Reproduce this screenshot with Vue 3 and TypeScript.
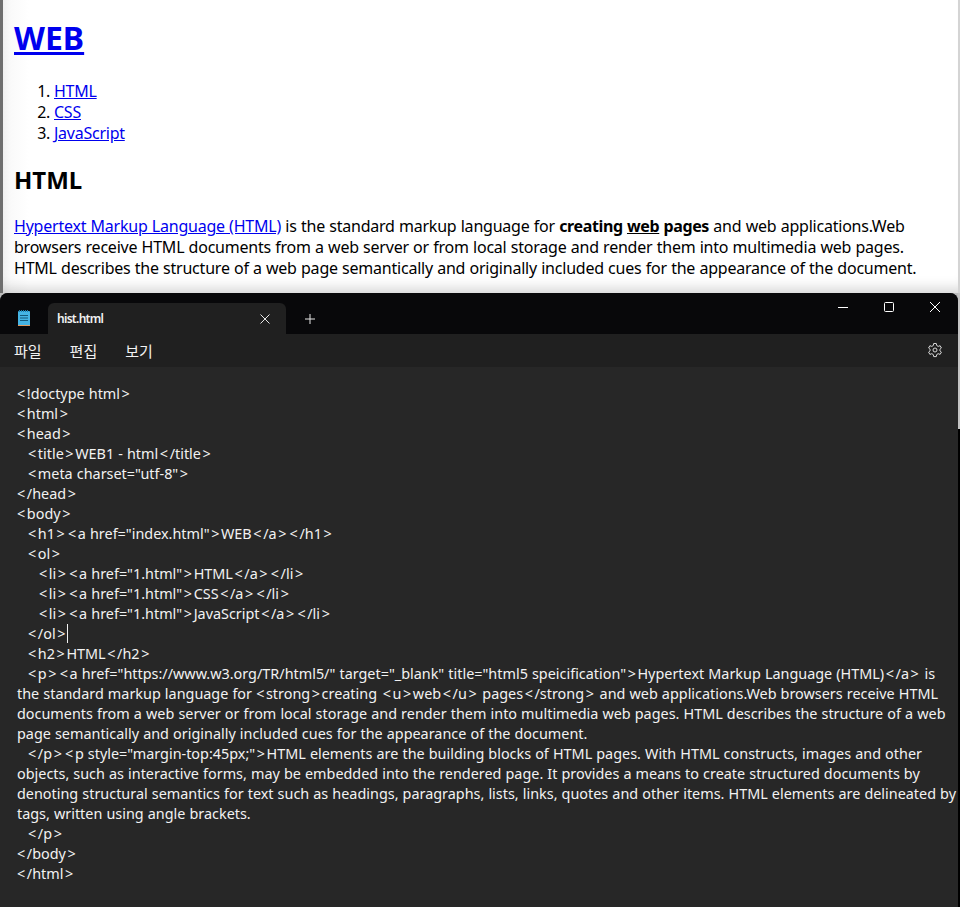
<script setup lang="ts">
interface Token { text: string; bracket: boolean }
interface Line { indent: number; tokens: Token[]; caret: boolean }

const menus: string[] = ['파일', '편집', '보기']
const source: string[] = [
  '<!doctype html>',
  '<html>',
  '<head>',
  '  <title>WEB1 - html</title>',
  '  <meta charset="utf-8">',
  '</head>',
  '<body>',
  '  <h1><a href="index.html">WEB</a></h1>',
  '  <ol>',
  '    <li><a href="1.html">HTML</a></li>',
  '    <li><a href="1.html">CSS</a></li>',
  '    <li><a href="1.html">JavaScript</a></li>',
  '  </ol>|',
  '  <h2>HTML</h2>',
  '  <p><a href="https://www.w3.org/TR/html5/" target="_blank" title="html5 speicification">Hypertext Markup Language (HTML)</a> is',
  'the standard markup language for <strong>creating <u>web</u> pages</strong> and web applications.Web browsers receive HTML',
  'documents from a web server or from local storage and render them into multimedia web pages. HTML describes the structure of a web',
  'page semantically and originally included cues for the appearance of the document.',
  '  </p><p style="margin-top:45px;">HTML elements are the building blocks of HTML pages. With HTML constructs, images and other',
  'objects, such as interactive forms, may be embedded into the rendered page. It provides a means to create structured documents by',
  'denoting structural semantics for text such as headings, paragraphs, lists, links, quotes and other items. HTML elements are delineated by',
  'tags, written using angle brackets.',
  '  </p>',
  '</body>',
  '</html>',
]

const lines: Line[] = source.map((raw) => {
  const caret = raw.endsWith('|')
  const body = caret ? raw.slice(0, -1) : raw
  const trimmed = body.replace(/^ +/, '')
  const tokens = trimmed
    .split(/([<>])/)
    .filter((t) => t.length > 0)
    .map((t) => ({ text: t, bracket: t === '<' || t === '>' }))
  return { indent: (body.length - trimmed.length) * 5.5, tokens, caret }
})
</script>

<template>
  <div class="screen">
    <section class="page">
      <h1><a href="#">WEB</a></h1>
      <ol>
        <li><a href="#">HTML</a></li>
        <li><a href="#">CSS</a></li>
        <li><a href="#">JavaScript</a></li>
      </ol>
      <h2>HTML</h2>
      <p><a href="#">Hypertext Markup Language (HTML)</a> is the standard markup language for <strong>creating <u>web</u> pages</strong> and web applications.Web browsers receive HTML documents from a web server or from local storage and render them into multimedia web pages. HTML describes the structure of a web page semantically and originally included cues for the appearance of the document.</p>
    </section>
    <div class="lower">
      <section class="notepad">
        <header class="titlebar">
          <svg class="app-icon" width="16" height="18" viewBox="0 0 16 18">
            <rect x="2" y="2" width="12" height="15" rx="1" fill="#45b4e4" />
            <rect x="2" y="16" width="12" height="1" fill="#e09a60" />
            <path d="M3.500 1v2M5.500 1v2M7.500 1v2M9.500 1v2M11.500 1v2" stroke="#1d7fae" stroke-width="1" />
            <path d="M4 6.500h8M4 9h8M4 11.500h8" stroke="#14587a" stroke-width="1" />
          </svg>
          <div class="tab">
            <span class="tab-name">hist.html</span>
            <svg class="tab-close" width="12" height="12" viewBox="0 0 12 12"><path d="M1.500 1.500l9 9M10.500 1.500l-9 9" stroke="#e6e6e6" stroke-width="1" fill="none" /></svg>
          </div>
          <svg class="plus" width="12" height="12" viewBox="0 0 12 12"><path d="M6 1v10M1 6h10" stroke="#e6e6e6" stroke-width="1" fill="none" /></svg>
          <div class="controls">
            <svg width="12" height="12" viewBox="0 0 12 12"><path d="M1 6.500h10" stroke="#fff" stroke-width="1" fill="none" /></svg>
            <svg width="12" height="12" viewBox="0 0 12 12"><rect x="1.500" y="1.500" width="9" height="9" rx="1" stroke="#fff" stroke-width="1" fill="none" /></svg>
            <svg width="12" height="12" viewBox="0 0 12 12"><path d="M1 1l10 10M11 1L1 11" stroke="#fff" stroke-width="1" fill="none" /></svg>
          </div>
        </header>
        <nav class="menubar">
          <span v-for="m in menus" :key="m" class="menu">{{ m }}</span>
          <svg class="gear" width="16" height="16" viewBox="0 0 16 16" fill="none" stroke="#d8d8d8" stroke-width="1">
            <path d="M6.700 1.500h2.600l.4 2 1.500.9 1.900-.7 1.300 2.300-1.500 1.300v1.500l1.500 1.300-1.300 2.300-1.900-.7-1.500.9-.4 2H6.700l-.4-2-1.500-.9-1.900.7-1.300-2.300 1.500-1.300V7.300L1.600 6l1.300-2.300 1.900.7 1.500-.9z" />
            <circle cx="8" cy="8" r="2" />
          </svg>
        </nav>
        <div class="editor">
          <div v-for="(l, i) in lines" :key="i" class="line" :style="{ paddingLeft: l.indent + 'px' }">
            <template v-for="(t, j) in l.tokens" :key="j"><span v-if="t.bracket" class="bracket">{{ t.text }}</span><template v-else>{{ t.text }}</template></template><span v-if="l.caret" class="caret"></span>
          </div>
        </div>
      </section>
      <div class="edge"></div>
    </div>
  </div>
</template>

<style>
html, body { margin: 0; background: #fff; }
</style>

<style scoped>
.screen {
  width: 960px;
  height: 907px;
  overflow: hidden;
  display: flex;
  flex-direction: column;
  font-family: "Noto Sans", "Noto Sans CJK KR", sans-serif;
}
.page {
  height: 293px;
  flex: none;
  box-sizing: border-box;
  padding: 0 12px 0 11px;
  color: #000;
  border-left: 3px solid #6e6e6e;
  border-right: 2px solid #d4d4d4;
  background: linear-gradient(90deg, #f0f0f0 0, #fafafa 8px, #fff 26px);
  font-size: 16px;
  line-height: 21px;
  overflow: hidden;
  box-shadow: inset 0 -16px 14px -12px rgba(0, 0, 0, 0.18);
}
.page a { color: #0000ee; }
.page h1 { font-size: 32px; line-height: 42px; margin: 17px 0 0; font-weight: 700; }
.page ol { margin: 22px 0 0; padding-left: 40px; letter-spacing: -0.25px; }
.page h2 { font-size: 24px; line-height: 32px; margin: 20px 0 0; font-weight: 700; }
.page p { margin: 20px 0 0; letter-spacing: -0.22px; word-spacing: 0.32px; }
.page strong { letter-spacing: -0.35px; }
.lower {
  flex: 1;
  display: flex;
  min-height: 0;
  background: #bcbcbc;
}
.edge {
  width: 2px;
  flex: none;
  background: linear-gradient(180deg, #c4c4c4 0, #c4c4c4 136px, #000 136px);
}
.notepad {
  width: 958px;
  flex: none;
  background: #272727;
  color: #f2f2f2;
  border-top-left-radius: 8px;
  border-top-right-radius: 8px;
  display: flex;
  flex-direction: column;
  overflow: hidden;
}
.titlebar {
  height: 41px;
  flex: none;
  background: #08080a;
  display: flex;
  align-items: flex-end;
  position: relative;
}
.app-icon { margin: 0 0 7px 16px; }
.tab {
  width: 238px;
  height: 31px;
  margin-left: 16px;
  background: #202020;
  border-radius: 6px 6px 0 0;
  box-sizing: border-box;
  padding: 0 15px 0 9px;
  display: flex;
  align-items: center;
  justify-content: space-between;
  font-size: 12px;
  font-weight: 600;
  letter-spacing: -0.7px;
}
.plus { margin: 0 0 9px 18px; }
.controls {
  position: absolute;
  top: 8px;
  right: 17px;
  display: flex;
  gap: 34px;
}
.menubar {
  height: 33px;
  flex: none;
  background: #202020;
  display: flex;
  align-items: center;
  padding-left: 14px;
  gap: 28px;
  font-size: 15px;
  position: relative;
}
.gear { position: absolute; right: 15px; top: 8px; }
.editor {
  flex: 1;
  padding: 17px 0 0 17px;
  font-size: 14.4px;
  word-spacing: 0.35px;
  line-height: 20px;
}
.line { white-space: pre; height: 20px; }
.bracket { margin: 0 1.6px; }
.bracket:first-child { margin-left: 0; }
.caret {
  display: inline-block;
  width: 1px;
  height: 19px;
  background: #f2f2f2;
  vertical-align: -4px;
}
</style>
